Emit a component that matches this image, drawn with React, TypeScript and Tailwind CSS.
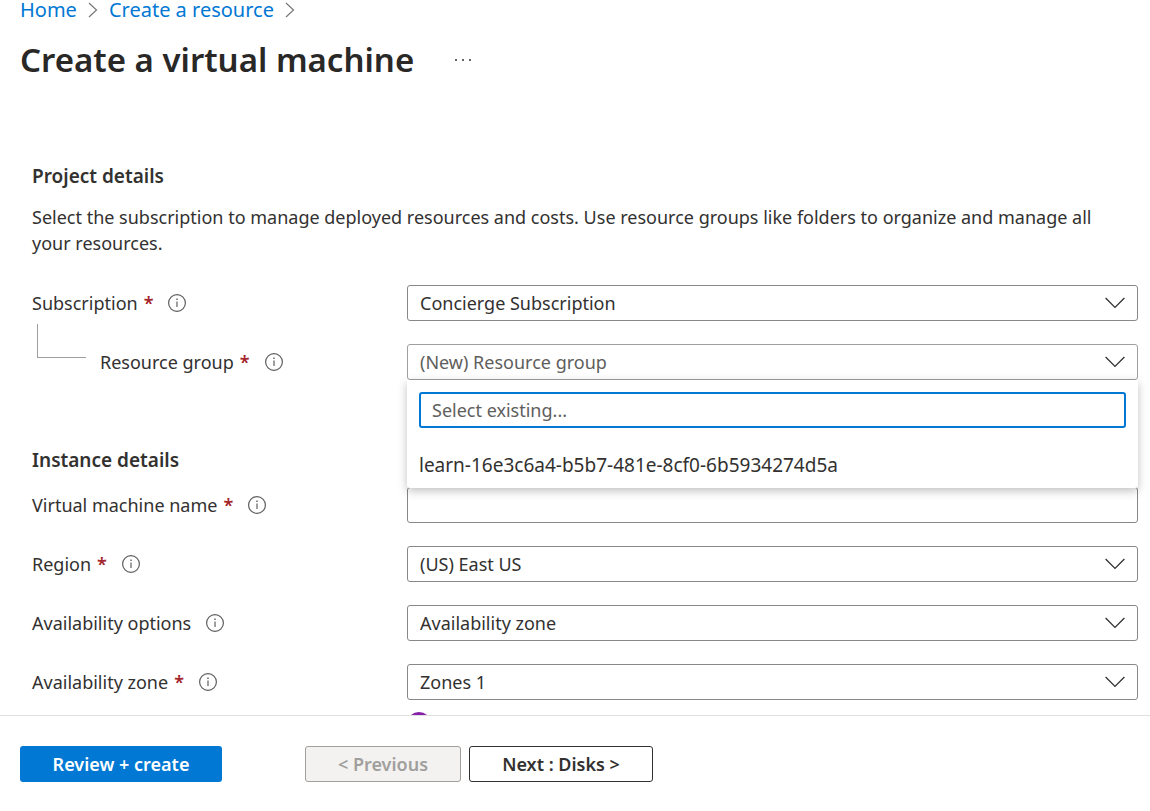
import React from 'react';

const Chevron = ({ className = '' }: { className?: string }) => (
  <svg viewBox="0 0 20 12" className={className} fill="none" stroke="currentColor" strokeWidth="1.3" aria-hidden="true">
    <path d="M0.6 1 L10 10.4 L19.4 1" />
  </svg>
);

const Crumb = () => (
  <svg viewBox="0 0 10 16" className="h-4 w-[10px] text-[#767676]" fill="none" stroke="currentColor" strokeWidth="1.2" aria-hidden="true">
    <path d="M1 1 L8.5 8 L1 15" />
  </svg>
);

const InfoIcon = () => (
  <svg viewBox="0 0 20 20" className="h-5 w-5 text-[#605e5c]" fill="none" stroke="currentColor" aria-hidden="true">
    <circle cx="10" cy="10" r="8.4" strokeWidth="1.2" />
    <path d="M10 8.4 V14" strokeWidth="1.2" />
    <path d="M10 5.6 V7" strokeWidth="1.4" />
  </svg>
);

type FieldProps = {
  id: string;
  label: string;
  required?: boolean;
  nested?: boolean;
  children: React.ReactNode;
};

const Field = ({ id, label, required, nested, children }: FieldProps) => (
  <div className="flex items-center">
    <div className="flex h-9 w-[375px] shrink-0 items-center">
      {nested && <div className="-mt-5 mr-[14px] ml-[5px] h-[34px] w-[49px] self-start border-b border-l border-[#a19f9d]" />}
      <label htmlFor={id}>
        {label}
        {required && <span className="ml-[6px] font-semibold text-[#a4262c]">*</span>}
      </label>
      <span className="ml-[14px]">
        <InfoIcon />
      </span>
    </div>
    <div className="relative min-w-0 flex-1">{children}</div>
  </div>
);

const Select = ({ id, value, muted }: { id: string; value: string; muted?: boolean }) => (
  <div className="relative">
    <select
      id={id}
      className={`block h-9 w-full appearance-none rounded-[3px] border bg-white pr-12 pl-3 outline-none ${
        muted ? 'border-[#a19f9d] text-[#605e5c]' : 'border-[#8a8886] text-[#323130]'
      }`}
    >
      <option>{value}</option>
    </select>
    <Chevron className="pointer-events-none absolute top-3 right-[13px] h-3 w-5 text-[#323130]" />
  </div>
);

const App = () => {
  return (
    <div className="flex h-screen flex-col bg-white font-['Noto_Sans',sans-serif] text-[18px] leading-[26px] text-[#323130]">
      <header className="px-5">
        <nav className="flex items-center gap-[11px] text-[20px] leading-5 text-[#0078d4]">
          <a href="#home">Home</a>
          <Crumb />
          <a href="#create">Create a resource</a>
          <Crumb />
        </nav>
        <div className="mt-4 flex items-center gap-9">
          <h1 className="text-[33px] leading-[48px] font-semibold text-[#292827]">Create a virtual machine</h1>
          <button type="button" aria-label="More options" className="p-1 text-[#323130]">
            <svg viewBox="0 0 18 4" className="h-1 w-[18px]" fill="currentColor">
              <circle cx="2" cy="2" r="1" />
              <circle cx="9" cy="2" r="1" />
              <circle cx="16" cy="2" r="1" />
            </svg>
          </button>
        </div>
      </header>

      <main className="min-h-0 flex-1 overflow-hidden pt-[79px] pr-3 pl-8">
        <section>
          <h2 className="text-[19px] font-semibold">Project details</h2>
          <p className="mt-[15px] pr-4">
            Select the subscription to manage deployed resources and costs. Use resource groups like folders to organize and manage all your resources.
          </p>
          <div className="mt-[29px] flex flex-col gap-[23px]">
            <Field id="subscription" label="Subscription" required>
              <Select id="subscription" value="Concierge Subscription" />
            </Field>
            <Field id="resource-group" label="Resource group" required nested>
              <Select id="resource-group" value="(New) Resource group" muted />
              <div className="absolute inset-x-0 top-full z-10 rounded-b-[3px] bg-white px-3 pt-3 pb-[10px] shadow-[0_3px_10px_rgba(0,0,0,0.25)]">
                <input
                  type="text"
                  aria-label="Select existing resource group"
                  placeholder="Select existing..."
                  className="block h-9 w-full rounded-[3px] border-2 border-[#0078d4] px-[11px] outline-none placeholder:text-[#605e5c]"
                />
                <button type="button" className="mt-6 block w-full text-left text-[19px]">
                  learn-16e3c6a4-b5b7-481e-8cf0-6b5934274d5a
                </button>
              </div>
            </Field>
          </div>
        </section>

        <section className="mt-[67px]">
          <h2 className="text-[19px] font-semibold">Instance details</h2>
          <div className="mt-[14px] flex flex-col gap-[23px]">
            <Field id="vm-name" label="Virtual machine name" required>
              <input id="vm-name" type="text" className="block h-9 w-full rounded-[3px] border border-[#8a8886] px-3 outline-none" />
            </Field>
            <Field id="region" label="Region" required>
              <Select id="region" value="(US) East US" />
            </Field>
            <Field id="availability-options" label="Availability options">
              <Select id="availability-options" value="Availability zone" />
            </Field>
            <Field id="availability-zone" label="Availability zone" required>
              <Select id="availability-zone" value="Zones 1" />
            </Field>
          </div>
          <div className="mt-3 ml-[375px] h-6 w-6 rounded-full bg-[#881fa8]" />
        </section>
      </main>

      <footer className="flex h-24 shrink-0 items-start border-t border-[#e1dfdd] px-5 pt-[30px] font-semibold">
        <button type="button" className="h-9 w-[202px] rounded-[3px] bg-[#0078d4] text-white">
          Review + create
        </button>
        <button type="button" disabled className="ml-[83px] h-9 w-[156px] rounded-[3px] border border-[#a19f9d] bg-[#f3f2f1] text-[#a19f9d]">
          &lt; Previous
        </button>
        <button type="button" className="ml-2 h-9 w-[184px] rounded-[3px] border border-[#323130] bg-white">
          Next : Disks &gt;
        </button>
      </footer>
    </div>
  );
};

export default App;
